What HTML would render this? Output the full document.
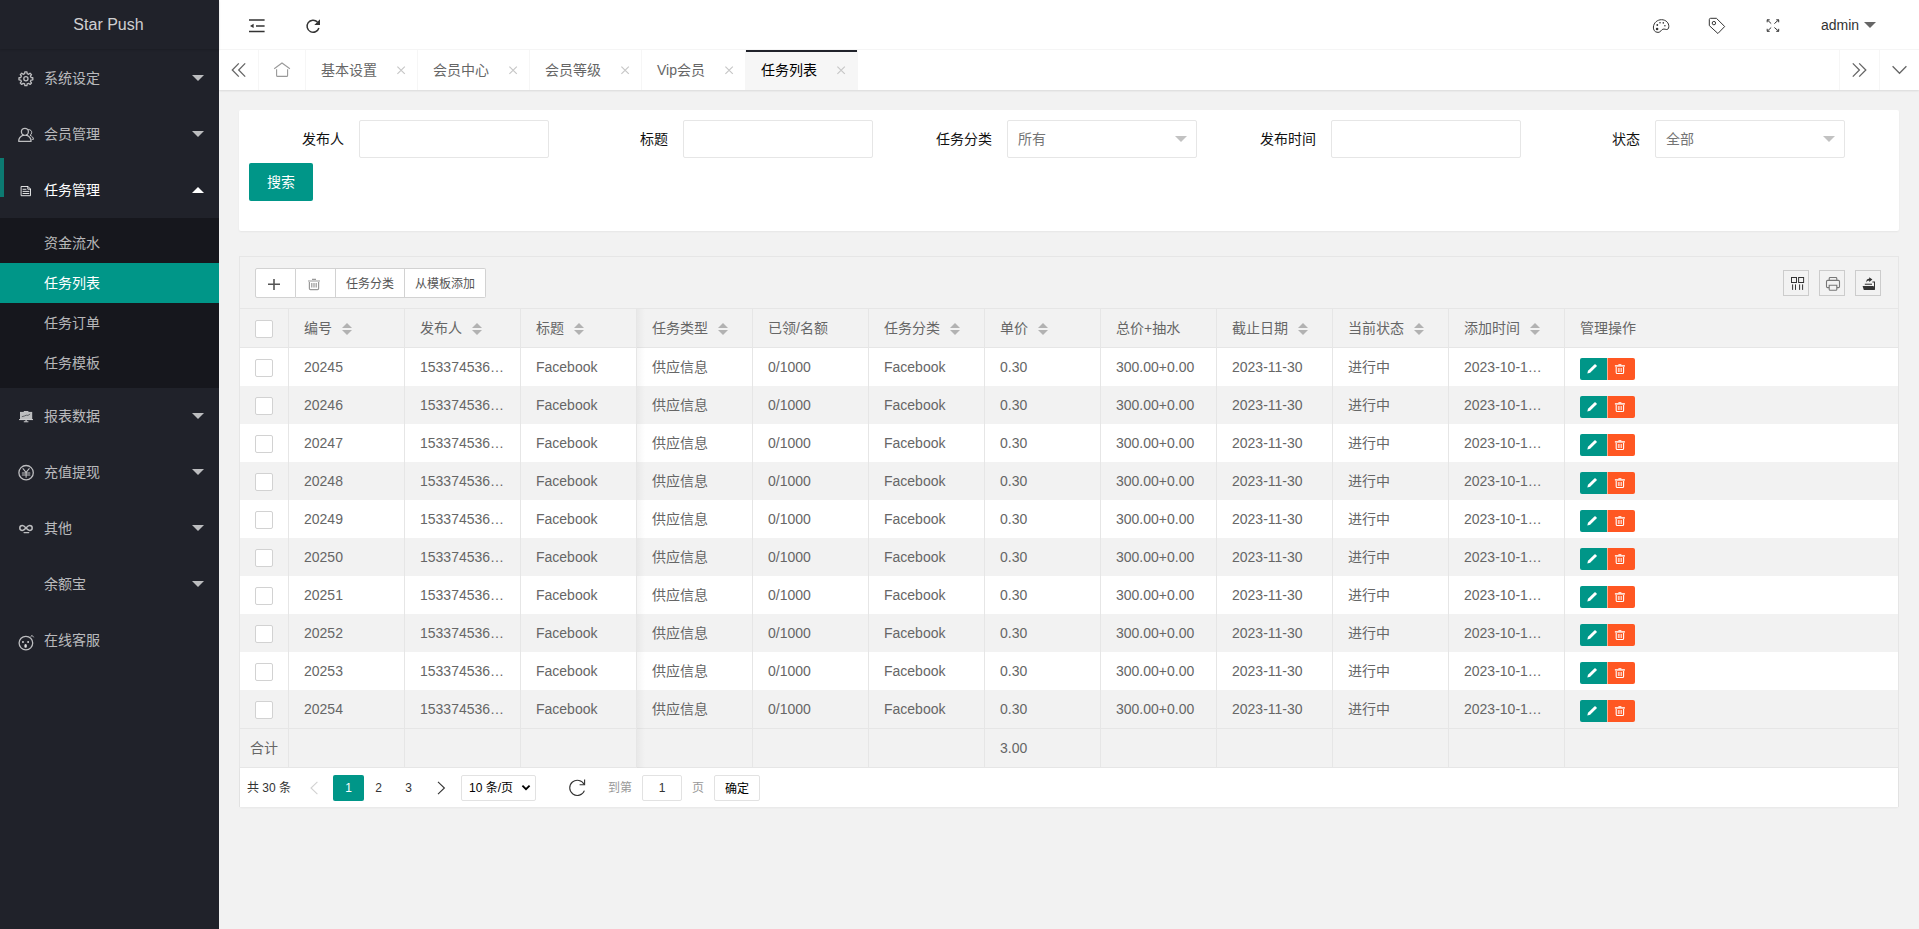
<!DOCTYPE html>
<html lang="zh-CN">
<head>
<meta charset="utf-8">
<title>Star Push</title>
<style>
*{box-sizing:border-box;margin:0;padding:0}
html,body{width:1919px;height:929px;overflow:hidden}
body{font-family:"Liberation Sans","Noto Sans CJK SC",sans-serif;font-size:14px;line-height:24px;color:#333;background:#f2f2f2;position:relative}
ul,li,dl,dd{list-style:none}
svg{display:block}
.abs{position:absolute}

/* ---------- side ---------- */
.side{position:absolute;left:0;top:0;width:219px;height:929px;background:#20222a;color:rgba(255,255,255,.7);z-index:5}
.logo{position:absolute;left:0;top:0;width:219px;height:49px;line-height:50px;padding-right:2px;text-align:center;font-size:16px;color:rgba(255,255,255,.8);box-shadow:0 1px 2px 0 rgba(0,0,0,.15)}
.nav{position:absolute;left:0;top:50px;width:219px}
.nav .it{position:relative;height:56px;line-height:56px;padding-left:44px;font-size:14px;color:rgba(255,255,255,.7)}
.nav .it.on{color:#fff}
.nav .it .ic{position:absolute;left:18px;top:20px;width:16px;height:16px}
.nav .it .more{position:absolute;right:15px;top:25px;width:0;height:0;border:6px solid transparent;border-top-color:rgba(255,255,255,.7);border-bottom-width:0}
.nav .it.on .more{border-top-width:0;border-bottom-width:6px;border-bottom-color:#fff;top:25px}
.nav .child{background:rgba(0,0,0,.3);padding:5px 0}
.nav .child dd{height:40px;line-height:40px;padding-left:44px;color:rgba(255,255,255,.7)}
.nav .child dd.this{background:#009688;color:#fff}
.navbar{position:absolute;left:0;top:158px;width:4px;height:39px;background:#0c7a71}

/* ---------- header ---------- */
.header{position:absolute;left:219px;top:0;width:1700px;height:50px;background:#fff;border-bottom:1px solid #f6f6f6}
.header .hi{position:absolute;top:0;height:50px}
.tabs{position:absolute;left:219px;top:50px;width:1700px;height:40px;background:#fff;box-shadow:0 1px 2px 0 rgba(0,0,0,.1);line-height:40px;color:#666;z-index:2}
.tabs .ctl{position:absolute;top:0;width:40px;height:40px;border-left:1px solid #f6f6f6}
.tabs .ctl.prev{left:0;border-left:none;border-right:1px solid #f6f6f6}
.tabs .ctl.next{right:40px}
.tabs .ctl.down{right:0}
.tabs ul{position:absolute;left:40px;top:0;height:40px;white-space:nowrap;font-size:0}
.tabs li{position:relative;display:inline-block;vertical-align:top;height:40px;line-height:40px;font-size:14px;padding:0 40px 0 15px;border-right:1px solid #f6f6f6;color:#666}
.tabs li.home{padding:0 15px;width:47px}
.tabs li.this{background:#f6f6f6;color:#000}
.tabs li.this:after{content:"";position:absolute;left:0;top:0;width:100%;height:2px;background:#20222a}
.tabs li .x{position:absolute;right:10px;top:14px;width:12px;height:12px}

/* ---------- body ---------- */
.card{position:absolute;left:239px;top:110px;width:1660px;height:121px;background:#fff;border-radius:2px;box-shadow:0 1px 2px 0 rgba(0,0,0,.05)}
.flabel{position:absolute;top:120px;height:38px;line-height:38px;width:110px;padding:0 15px;text-align:right;color:#111}
.finput{position:absolute;top:120px;height:38px;width:190px;border:1px solid #e6e6e6;border-radius:2px;background:#fff;line-height:36px;padding-left:10px;color:#757575}
.finput .edge{position:absolute;right:9px;top:15px;width:0;height:0;border:6px solid transparent;border-top-color:#c2c2c2;border-bottom-width:0}
.sbtn{position:absolute;left:249px;top:163px;width:64px;height:38px;line-height:38px;background:#009688;color:#fff;text-align:center;border-radius:2px;font-size:14px}

.tview{position:absolute;left:239px;top:256px;width:1660px;height:551px;border:1px solid #e6e6e6;border-bottom:none;color:#666}
.tool{position:absolute;left:0;top:0;width:1658px;height:52px;border-bottom:1px solid #e6e6e6;background:#f2f2f2}
.bgrp{position:absolute;left:15px;top:11px;height:30px;font-size:0;white-space:nowrap}
.bgrp span{display:inline-block;vertical-align:top;height:30px;line-height:30px;font-size:12px;color:#555;background:#fff;border:1px solid #d2d2d2;border-left:none;text-align:center}
.bgrp span:first-child{border-left:1px solid #d2d2d2;border-radius:2px 0 0 2px}
.bgrp span:last-child{border-radius:0 2px 2px 0}
.tself{position:absolute;top:13px;width:26px;height:26px;border:1px solid #ccc}

table{border-collapse:separate;border-spacing:0;table-layout:fixed}
.thead{position:absolute;left:0;top:52px;width:1658px;height:39px;border-bottom:1px solid #e6e6e6;background:#f2f2f2}
.tbody{position:absolute;left:0;top:91px;width:1658px}
.ttotal{position:absolute;left:0;top:471px;width:1658px;height:40px;border-top:1px solid #e6e6e6;border-bottom:1px solid #e6e6e6;background:#f2f2f2}
.tview td,.tview th{height:38px;border-right:1px solid #e6e6e6;padding:0 15px;font-weight:400;text-align:left;font-size:14px;line-height:28px;color:#666;white-space:nowrap;overflow:hidden}
.tview td:last-child,.tview th:last-child{border-right:none}
.tview tr.ev td{background:#f2f2f2}
.tview tr td{background:#fff}
.ttotal td{background:#f2f2f2 !important}
.ck{display:block;width:18px;height:18px;border:1px solid #d2d2d2;border-radius:2px;background:#fff;margin-top:1px}
.sort{display:inline-block;position:relative;vertical-align:middle;width:10px;height:20px;margin-left:10px;top:0px}
.sort:before{content:"";position:absolute;left:0;top:4px;border:5px solid transparent;border-top-width:0;border-bottom-color:#b2b2b2}
.sort:after{content:"";position:absolute;left:0;top:11px;border:5px solid transparent;border-bottom-width:0;border-top-color:#b2b2b2}
.ops{display:block;font-size:0;height:22px;margin-top:3px}
.ops i{display:inline-block;vertical-align:top;height:22px}
.ops .e{width:27px;background:#009688;border-radius:2px 0 0 2px}
.ops .d{width:28px;background:#ff5722;border-radius:0 2px 2px 0;border-left:1px solid rgba(255,255,255,.5)}
.shadow{position:absolute;left:397px;top:52px;width:8px;height:459px;background:linear-gradient(to right,rgba(0,0,0,.04),rgba(0,0,0,0))}

.pager{position:absolute;left:0;top:511px;width:1658px;height:39px;background:#fff;font-size:12px;line-height:26px;color:#333;box-shadow:0 1px 2px 0 rgba(0,0,0,.05)}
.pager .p{position:absolute;top:7px;height:26px;line-height:26px;white-space:nowrap}
</style>
</head>
<body>

<!-- SIDE -->
<div class="side">
  <div class="logo">Star Push</div>
  <div class="nav">
    <div class="it">系统设定<span class="more"></span></div>
    <div class="it">会员管理<span class="more"></span></div>
    <div class="it on">任务管理<span class="more"></span></div>
    <dl class="child">
      <dd>资金流水</dd>
      <dd class="this">任务列表</dd>
      <dd>任务订单</dd>
      <dd>任务模板</dd>
    </dl>
    <div class="it">报表数据<span class="more"></span></div>
    <div class="it">充值提现<span class="more"></span></div>
    <div class="it">其他<span class="more"></span></div>
    <div class="it">余额宝<span class="more"></span></div>
    <div class="it">在线客服</div>
  </div>
  <div class="navbar"></div>
  <svg class="abs" style="left:0;top:0" width="219" height="929" viewBox="0 0 219 929" fill="none" stroke="rgba(255,255,255,.7)" stroke-width="1.3" stroke-linejoin="round" stroke-linecap="round"><path d="M31.05 77.56 L32.82 77.76 L32.82 79.84 L31.05 80.04 L30.42 81.57 L31.53 82.96 L30.06 84.43 L28.67 83.32 L27.14 83.95 L26.94 85.72 L24.86 85.72 L24.66 83.95 L23.13 83.32 L21.74 84.43 L20.27 82.96 L21.38 81.57 L20.75 80.04 L18.98 79.84 L18.98 77.76 L20.75 77.56 L21.38 76.03 L20.27 74.64 L21.74 73.17 L23.13 74.28 L24.66 73.65 L24.86 71.88 L26.94 71.88 L27.14 73.65 L28.67 74.28 L30.06 73.17 L31.53 74.64 L30.42 76.03Z"/><circle cx="25.9" cy="78.8" r="2.1"/><circle cx="24.9" cy="131.8" r="3.5"/><path d="M23.2 135.2 C20.2 136.4 18.7 138.6 18.7 141.3 H31.1 C31.1 138.6 29.6 136.4 26.6 135.2"/><path d="M28.6 129.6 C30.6 129.4 31.9 131 31.7 132.8 C31.6 134 30.8 134.9 30 135.3 C32.2 136.2 33.4 137.6 33.5 139.3 H32.2" stroke-width="1"/><g stroke="rgba(255,255,255,.85)" stroke-width="1"><path d="M21.5 186.5 H28 L30.5 189 V195.7 H21.5 Z" stroke-linejoin="miter"/><path d="M27.8 186.6 V189.2 H30.4" /><path d="M23 189.3 H26 M23 191.4 H28.9 M23 193.5 H28.9"/></g><g stroke="none" fill="rgba(255,255,255,.7)"><rect x="20" y="411.9" width="12.2" height="7.4"/><rect x="23.8" y="411" width="4.6" height="1"/><rect x="19" y="419" width="14" height="1.1"/><rect x="25.4" y="420" width="1.4" height="1.4"/><rect x="23.8" y="421.2" width="4.6" height="1.1"/></g><path d="M22.2 416.6 L24.4 416 L26.2 415.2 L28 415.4 L29.8 414.2" stroke="#3a3c44" stroke-width=".7"/><circle cx="26.1" cy="472.7" r="7.2"/><path d="M23 468.7 L26.1 472.4 L29.2 468.7 M22.3 473 H29.9 M22.3 475 H29.9 M26.1 472.4 V477.2" stroke-width="1.1"/><path d="M26 528 C24.6 526.4 23.6 525.6 22.4 525.6 C20.9 525.6 19.8 526.7 19.8 528 C19.8 529.3 20.9 530.4 22.4 530.4 C23.6 530.4 24.6 529.6 26 528 C27.4 526.4 28.4 525.6 29.6 525.6 C31.1 525.6 32.2 526.7 32.2 528 C32.2 529.3 31.1 530.4 29.6 530.4 C28.4 530.4 27.4 529.6 26 528 Z" stroke-width="1.5"/><path d="M24 532.6 H28.8" stroke-width="1.1"/><circle cx="25.9" cy="643.1" r="6.8"/><g stroke="none" fill="rgba(255,255,255,.85)"><rect x="22.1" y="641.2" width="1.7" height="1.6"/><rect x="27.3" y="641.2" width="1.7" height="1.6"/><ellipse cx="25.6" cy="645.9" rx="1.3" ry="1.9"/></g><path d="M31 636.2 L32.2 635.5 L33.4 637" stroke-width="1"/></svg>
</div>

<!-- HEADER -->
<div class="header">
  <svg class="abs" style="left:0;top:0" width="1700" height="50" viewBox="219 0 1700 50" fill="none" stroke="#333" stroke-width="1.5"><path d="M249 20.1 H264.6 M256 25.9 H264.6 M249 31.5 H264.6"/><path d="M250 25.9 L253.6 23.7 V28.1 Z" fill="#333" stroke="none"/><path d="M317.4 21.9 A6.05 6.05 0 1 0 318.9 28.0"/><path d="M320 19.2 V24.9 H314.3 Z" fill="#333" stroke="none"/><g stroke-width="1" stroke="#333"><path d="M1658 32.4 C1654.5 32.4 1653.2 29.5 1653.4 27 C1653.8 22.5 1657.5 19.7 1661.5 19.7 C1666 19.7 1669 23 1668.8 26.6 C1668.7 28.9 1667.6 29.7 1666.3 29.5 C1664.8 29.2 1663.2 28.5 1661.8 29.9 C1660.7 31.1 1659.8 32.4 1658 32.4 Z"/></g><g fill="#333" stroke="none"><circle cx="1657.1" cy="29" r="1.3"/><circle cx="1657.3" cy="25" r=".9"/><circle cx="1660" cy="22.7" r=".8"/><circle cx="1663.3" cy="22.9" r=".8"/><circle cx="1664.9" cy="25.8" r=".8"/></g><g stroke-width="1" stroke="#333"><path d="M1710.6 18.3 H1716.4 L1724.7 26.5 L1717.9 33.5 L1709.3 25.6 V19.6 Q1709.3 18.3 1710.6 18.3 Z" stroke-linejoin="round"/><circle cx="1713.9" cy="23.1" r="1.7"/></g><g stroke-width="1" stroke="#333"><path d="M1771.2 23.6 L1767.3 19.9 M1767.2 22.3 V19.8 H1769.7 M1774.4 23.6 L1778.6 19.9 M1776.2 19.8 H1778.7 V22.3 M1771.2 27.5 L1767.3 31.2 M1767.2 28.8 V31.3 H1769.7 M1774.4 27.5 L1778.6 31.2 M1776.2 31.3 H1778.7 V28.8"/></g></svg><span class="abs" style="left:1602px;top:13px;height:24px;line-height:24px;font-size:14px;color:#333">admin</span><span class="abs" style="left:1645px;top:22px;width:0;height:0;border:6px solid transparent;border-top-color:#666;border-bottom-width:0"></span>
</div>

<!-- TABS -->
<div class="tabs">
  <div class="ctl prev"></div>
  <ul>
    <li class="home"></li>
    <li>基本设置<svg class="x" width="12" height="12" viewBox="0 0 12 12" fill="none" stroke="#c6c6c6" stroke-width="1.15"><path d="M2.4 2.7 L9.8 9.9 M9.8 2.7 L2.4 9.9"/></svg></li>
    <li>会员中心<svg class="x" width="12" height="12" viewBox="0 0 12 12" fill="none" stroke="#c6c6c6" stroke-width="1.15"><path d="M2.4 2.7 L9.8 9.9 M9.8 2.7 L2.4 9.9"/></svg></li>
    <li>会员等级<svg class="x" width="12" height="12" viewBox="0 0 12 12" fill="none" stroke="#c6c6c6" stroke-width="1.15"><path d="M2.4 2.7 L9.8 9.9 M9.8 2.7 L2.4 9.9"/></svg></li>
    <li>Vip会员<svg class="x" width="12" height="12" viewBox="0 0 12 12" fill="none" stroke="#c6c6c6" stroke-width="1.15"><path d="M2.4 2.7 L9.8 9.9 M9.8 2.7 L2.4 9.9"/></svg></li>
    <li class="this">任务列表<svg class="x" width="12" height="12" viewBox="0 0 12 12" fill="none" stroke="#c6c6c6" stroke-width="1.15"><path d="M2.4 2.7 L9.8 9.9 M9.8 2.7 L2.4 9.9"/></svg></li>
  </ul>
  <div class="ctl next"></div>
  <div class="ctl down"></div>
  <svg class="abs" style="left:0;top:0;z-index:3;pointer-events:none" width="1700" height="40" viewBox="219 50 1700 40" fill="none" stroke="#666" stroke-width="1.3"><path d="M238.8 63.4 L232.3 70 L238.8 76.6 M245.2 63.4 L238.7 70 L245.2 76.6"/><path d="M1852.8 63.4 L1859.4 70 L1852.8 76.6 M1859.2 63.4 L1865.8 70 L1859.2 76.6"/><path d="M1892.6 66.3 L1899.5 73.3 L1906.4 66.3"/><g stroke="#999" stroke-width="1.1"><path d="M274.2 68.7 L282 63 L289.9 68.7"/><path d="M276.6 69.2 V75.4 Q276.6 76.4 277.6 76.4 H286.6 Q287.6 76.4 287.6 75.4 V69.2"/></g></svg>
</div>

<!-- SEARCH CARD -->
<div class="card"></div>
<div class="flabel" style="left:249px">发布人</div><div class="finput" style="left:359px"></div>
<div class="flabel" style="left:573px">标题</div><div class="finput" style="left:683px"></div>
<div class="flabel" style="left:897px">任务分类</div><div class="finput" style="left:1007px">所有<span class="edge"></span></div>
<div class="flabel" style="left:1221px">发布时间</div><div class="finput" style="left:1331px"></div>
<div class="flabel" style="left:1545px">状态</div><div class="finput" style="left:1655px">全部<span class="edge"></span></div>
<div class="sbtn">搜索</div>

<!-- TABLE -->
<div class="tview">
  <div class="tool">
    <div class="bgrp"><span style="width:41px"></span><span style="width:40px"></span><span style="width:69px">任务分类</span><span style="width:81px">从模板添加</span></div>
    <div class="tself" style="left:1543px" id="t1"></div>
    <div class="tself" style="left:1579px" id="t2"></div>
    <div class="tself" style="left:1615px" id="t3"></div>
    <svg class="abs" style="left:0;top:0" width="1658" height="51" viewBox="240 257 1658 51" fill="none"><path d="M268 284.3 H280 M274 278.9 V290" stroke="#555" stroke-width="1.6"/><g stroke="#999" stroke-width="1"><path d="M308 281 H320 M312 279.4 H316 M309.4 282 V288.6 Q309.4 289.6 310.4 289.6 H317.6 Q318.6 289.6 318.6 288.6 V282 M311.8 283 V287.6 M314 283 V287.6 M316.2 283 V287.6" stroke-width="1.2"/></g><g stroke="#333" stroke-width="1"><rect x="1791.5" y="277.5" width="5" height="5"/><rect x="1798.6" y="277.5" width="5" height="5"/><path d="M1792.6 284.4 V289.9 M1795.5 284.4 V289.9 M1799.6 284.4 V289.9 M1802.6 284.4 V289.9"/></g><g stroke="#777" stroke-width="1.1"><path d="M1829.2 280.3 V278.4 Q1829.2 277.5 1830.1 277.5 H1835.9 Q1836.8 277.5 1836.8 278.4 V280.3"/><path d="M1829 287.6 H1827.6 Q1826.5 287.6 1826.5 286.4 V281.6 Q1826.5 280.4 1827.6 280.4 H1838.4 Q1839.5 280.4 1839.5 281.6 V286.4 Q1839.5 287.6 1838.4 287.6 H1837"/><path d="M1829.2 285.2 H1836.8 V289.4 Q1836.8 290.3 1835.9 290.3 H1830.1 Q1829.2 290.3 1829.2 289.4 Z"/></g><g fill="#333" stroke="none"><path d="M1862.6 286 H1873.6 L1874.6 290 H1863.8 Z"/><path d="M1864.8 283.6 H1872 V285 H1864.8 Z" opacity=".75"/><path d="M1872.4 281.4 H1875 V289.8 H1874 V282.4 H1872.4 Z"/><path d="M1869.2 277.2 L1872.4 279.6 L1869.2 282 V280.4 C1867.6 280.4 1866.8 281.2 1866.4 282.6 C1866 280.2 1867 278.9 1869.2 278.8 Z"/></g></svg>
  </div>
  <div class="thead"><table><colgroup><col style="width:49px"><col style="width:116px"><col style="width:116px"><col style="width:116px"><col style="width:116px"><col style="width:116px"><col style="width:116px"><col style="width:116px"><col style="width:116px"><col style="width:116px"><col style="width:116px"><col style="width:116px"><col style="width:333px"></colgroup><tr><th><span class="ck"></span></th><th>编号<span class="sort"></span></th><th>发布人<span class="sort"></span></th><th>标题<span class="sort"></span></th><th>任务类型<span class="sort"></span></th><th>已领/名额</th><th>任务分类<span class="sort"></span></th><th>单价<span class="sort"></span></th><th>总价+抽水</th><th>截止日期<span class="sort"></span></th><th>当前状态<span class="sort"></span></th><th>添加时间<span class="sort"></span></th><th>管理操作</th></tr></table></div>
  <div class="tbody"><table><colgroup><col style="width:49px"><col style="width:116px"><col style="width:116px"><col style="width:116px"><col style="width:116px"><col style="width:116px"><col style="width:116px"><col style="width:116px"><col style="width:116px"><col style="width:116px"><col style="width:116px"><col style="width:116px"><col style="width:333px"></colgroup><tr><td><span class="ck"></span></td><td>20245</td><td>153374536…</td><td>Facebook</td><td>供应信息</td><td>0/1000</td><td>Facebook</td><td>0.30</td><td>300.00+0.00</td><td>2023-11-30</td><td>进行中</td><td>2023-10-1…</td><td><span class="ops"><i class="e"><svg width="27" height="22" viewBox="0 0 27 22"><path d="M7.3 15.4 L8 12.7 L14.4 6.4 Q15 5.9 15.6 6.4 L16.5 7.3 Q17 7.9 16.5 8.5 L10.1 14.7 Z" fill="#fff"/></svg></i><i class="d"><svg width="27" height="22" viewBox="0 0 27 22"><g fill="none" stroke="#fff"><path d="M6.9 7.9 H16.9" stroke-width="1.4"/><path d="M10.4 6.7 H13.4" stroke-width="1"/><path d="M8.2 9 V14.4 Q8.2 15.5 9.3 15.5 H14.5 Q15.6 15.5 15.6 14.4 V9" stroke-width="1.1"/><path d="M10.4 10 V14 M11.9 10 V14 M13.4 10 V14" stroke-width=".9" opacity=".85"/></g></svg></i></span></td></tr><tr class="ev"><td><span class="ck"></span></td><td>20246</td><td>153374536…</td><td>Facebook</td><td>供应信息</td><td>0/1000</td><td>Facebook</td><td>0.30</td><td>300.00+0.00</td><td>2023-11-30</td><td>进行中</td><td>2023-10-1…</td><td><span class="ops"><i class="e"><svg width="27" height="22" viewBox="0 0 27 22"><path d="M7.3 15.4 L8 12.7 L14.4 6.4 Q15 5.9 15.6 6.4 L16.5 7.3 Q17 7.9 16.5 8.5 L10.1 14.7 Z" fill="#fff"/></svg></i><i class="d"><svg width="27" height="22" viewBox="0 0 27 22"><g fill="none" stroke="#fff"><path d="M6.9 7.9 H16.9" stroke-width="1.4"/><path d="M10.4 6.7 H13.4" stroke-width="1"/><path d="M8.2 9 V14.4 Q8.2 15.5 9.3 15.5 H14.5 Q15.6 15.5 15.6 14.4 V9" stroke-width="1.1"/><path d="M10.4 10 V14 M11.9 10 V14 M13.4 10 V14" stroke-width=".9" opacity=".85"/></g></svg></i></span></td></tr><tr><td><span class="ck"></span></td><td>20247</td><td>153374536…</td><td>Facebook</td><td>供应信息</td><td>0/1000</td><td>Facebook</td><td>0.30</td><td>300.00+0.00</td><td>2023-11-30</td><td>进行中</td><td>2023-10-1…</td><td><span class="ops"><i class="e"><svg width="27" height="22" viewBox="0 0 27 22"><path d="M7.3 15.4 L8 12.7 L14.4 6.4 Q15 5.9 15.6 6.4 L16.5 7.3 Q17 7.9 16.5 8.5 L10.1 14.7 Z" fill="#fff"/></svg></i><i class="d"><svg width="27" height="22" viewBox="0 0 27 22"><g fill="none" stroke="#fff"><path d="M6.9 7.9 H16.9" stroke-width="1.4"/><path d="M10.4 6.7 H13.4" stroke-width="1"/><path d="M8.2 9 V14.4 Q8.2 15.5 9.3 15.5 H14.5 Q15.6 15.5 15.6 14.4 V9" stroke-width="1.1"/><path d="M10.4 10 V14 M11.9 10 V14 M13.4 10 V14" stroke-width=".9" opacity=".85"/></g></svg></i></span></td></tr><tr class="ev"><td><span class="ck"></span></td><td>20248</td><td>153374536…</td><td>Facebook</td><td>供应信息</td><td>0/1000</td><td>Facebook</td><td>0.30</td><td>300.00+0.00</td><td>2023-11-30</td><td>进行中</td><td>2023-10-1…</td><td><span class="ops"><i class="e"><svg width="27" height="22" viewBox="0 0 27 22"><path d="M7.3 15.4 L8 12.7 L14.4 6.4 Q15 5.9 15.6 6.4 L16.5 7.3 Q17 7.9 16.5 8.5 L10.1 14.7 Z" fill="#fff"/></svg></i><i class="d"><svg width="27" height="22" viewBox="0 0 27 22"><g fill="none" stroke="#fff"><path d="M6.9 7.9 H16.9" stroke-width="1.4"/><path d="M10.4 6.7 H13.4" stroke-width="1"/><path d="M8.2 9 V14.4 Q8.2 15.5 9.3 15.5 H14.5 Q15.6 15.5 15.6 14.4 V9" stroke-width="1.1"/><path d="M10.4 10 V14 M11.9 10 V14 M13.4 10 V14" stroke-width=".9" opacity=".85"/></g></svg></i></span></td></tr><tr><td><span class="ck"></span></td><td>20249</td><td>153374536…</td><td>Facebook</td><td>供应信息</td><td>0/1000</td><td>Facebook</td><td>0.30</td><td>300.00+0.00</td><td>2023-11-30</td><td>进行中</td><td>2023-10-1…</td><td><span class="ops"><i class="e"><svg width="27" height="22" viewBox="0 0 27 22"><path d="M7.3 15.4 L8 12.7 L14.4 6.4 Q15 5.9 15.6 6.4 L16.5 7.3 Q17 7.9 16.5 8.5 L10.1 14.7 Z" fill="#fff"/></svg></i><i class="d"><svg width="27" height="22" viewBox="0 0 27 22"><g fill="none" stroke="#fff"><path d="M6.9 7.9 H16.9" stroke-width="1.4"/><path d="M10.4 6.7 H13.4" stroke-width="1"/><path d="M8.2 9 V14.4 Q8.2 15.5 9.3 15.5 H14.5 Q15.6 15.5 15.6 14.4 V9" stroke-width="1.1"/><path d="M10.4 10 V14 M11.9 10 V14 M13.4 10 V14" stroke-width=".9" opacity=".85"/></g></svg></i></span></td></tr><tr class="ev"><td><span class="ck"></span></td><td>20250</td><td>153374536…</td><td>Facebook</td><td>供应信息</td><td>0/1000</td><td>Facebook</td><td>0.30</td><td>300.00+0.00</td><td>2023-11-30</td><td>进行中</td><td>2023-10-1…</td><td><span class="ops"><i class="e"><svg width="27" height="22" viewBox="0 0 27 22"><path d="M7.3 15.4 L8 12.7 L14.4 6.4 Q15 5.9 15.6 6.4 L16.5 7.3 Q17 7.9 16.5 8.5 L10.1 14.7 Z" fill="#fff"/></svg></i><i class="d"><svg width="27" height="22" viewBox="0 0 27 22"><g fill="none" stroke="#fff"><path d="M6.9 7.9 H16.9" stroke-width="1.4"/><path d="M10.4 6.7 H13.4" stroke-width="1"/><path d="M8.2 9 V14.4 Q8.2 15.5 9.3 15.5 H14.5 Q15.6 15.5 15.6 14.4 V9" stroke-width="1.1"/><path d="M10.4 10 V14 M11.9 10 V14 M13.4 10 V14" stroke-width=".9" opacity=".85"/></g></svg></i></span></td></tr><tr><td><span class="ck"></span></td><td>20251</td><td>153374536…</td><td>Facebook</td><td>供应信息</td><td>0/1000</td><td>Facebook</td><td>0.30</td><td>300.00+0.00</td><td>2023-11-30</td><td>进行中</td><td>2023-10-1…</td><td><span class="ops"><i class="e"><svg width="27" height="22" viewBox="0 0 27 22"><path d="M7.3 15.4 L8 12.7 L14.4 6.4 Q15 5.9 15.6 6.4 L16.5 7.3 Q17 7.9 16.5 8.5 L10.1 14.7 Z" fill="#fff"/></svg></i><i class="d"><svg width="27" height="22" viewBox="0 0 27 22"><g fill="none" stroke="#fff"><path d="M6.9 7.9 H16.9" stroke-width="1.4"/><path d="M10.4 6.7 H13.4" stroke-width="1"/><path d="M8.2 9 V14.4 Q8.2 15.5 9.3 15.5 H14.5 Q15.6 15.5 15.6 14.4 V9" stroke-width="1.1"/><path d="M10.4 10 V14 M11.9 10 V14 M13.4 10 V14" stroke-width=".9" opacity=".85"/></g></svg></i></span></td></tr><tr class="ev"><td><span class="ck"></span></td><td>20252</td><td>153374536…</td><td>Facebook</td><td>供应信息</td><td>0/1000</td><td>Facebook</td><td>0.30</td><td>300.00+0.00</td><td>2023-11-30</td><td>进行中</td><td>2023-10-1…</td><td><span class="ops"><i class="e"><svg width="27" height="22" viewBox="0 0 27 22"><path d="M7.3 15.4 L8 12.7 L14.4 6.4 Q15 5.9 15.6 6.4 L16.5 7.3 Q17 7.9 16.5 8.5 L10.1 14.7 Z" fill="#fff"/></svg></i><i class="d"><svg width="27" height="22" viewBox="0 0 27 22"><g fill="none" stroke="#fff"><path d="M6.9 7.9 H16.9" stroke-width="1.4"/><path d="M10.4 6.7 H13.4" stroke-width="1"/><path d="M8.2 9 V14.4 Q8.2 15.5 9.3 15.5 H14.5 Q15.6 15.5 15.6 14.4 V9" stroke-width="1.1"/><path d="M10.4 10 V14 M11.9 10 V14 M13.4 10 V14" stroke-width=".9" opacity=".85"/></g></svg></i></span></td></tr><tr><td><span class="ck"></span></td><td>20253</td><td>153374536…</td><td>Facebook</td><td>供应信息</td><td>0/1000</td><td>Facebook</td><td>0.30</td><td>300.00+0.00</td><td>2023-11-30</td><td>进行中</td><td>2023-10-1…</td><td><span class="ops"><i class="e"><svg width="27" height="22" viewBox="0 0 27 22"><path d="M7.3 15.4 L8 12.7 L14.4 6.4 Q15 5.9 15.6 6.4 L16.5 7.3 Q17 7.9 16.5 8.5 L10.1 14.7 Z" fill="#fff"/></svg></i><i class="d"><svg width="27" height="22" viewBox="0 0 27 22"><g fill="none" stroke="#fff"><path d="M6.9 7.9 H16.9" stroke-width="1.4"/><path d="M10.4 6.7 H13.4" stroke-width="1"/><path d="M8.2 9 V14.4 Q8.2 15.5 9.3 15.5 H14.5 Q15.6 15.5 15.6 14.4 V9" stroke-width="1.1"/><path d="M10.4 10 V14 M11.9 10 V14 M13.4 10 V14" stroke-width=".9" opacity=".85"/></g></svg></i></span></td></tr><tr class="ev"><td><span class="ck"></span></td><td>20254</td><td>153374536…</td><td>Facebook</td><td>供应信息</td><td>0/1000</td><td>Facebook</td><td>0.30</td><td>300.00+0.00</td><td>2023-11-30</td><td>进行中</td><td>2023-10-1…</td><td><span class="ops"><i class="e"><svg width="27" height="22" viewBox="0 0 27 22"><path d="M7.3 15.4 L8 12.7 L14.4 6.4 Q15 5.9 15.6 6.4 L16.5 7.3 Q17 7.9 16.5 8.5 L10.1 14.7 Z" fill="#fff"/></svg></i><i class="d"><svg width="27" height="22" viewBox="0 0 27 22"><g fill="none" stroke="#fff"><path d="M6.9 7.9 H16.9" stroke-width="1.4"/><path d="M10.4 6.7 H13.4" stroke-width="1"/><path d="M8.2 9 V14.4 Q8.2 15.5 9.3 15.5 H14.5 Q15.6 15.5 15.6 14.4 V9" stroke-width="1.1"/><path d="M10.4 10 V14 M11.9 10 V14 M13.4 10 V14" stroke-width=".9" opacity=".85"/></g></svg></i></span></td></tr></table></div>
  <div class="ttotal"><table><colgroup><col style="width:49px"><col style="width:116px"><col style="width:116px"><col style="width:116px"><col style="width:116px"><col style="width:116px"><col style="width:116px"><col style="width:116px"><col style="width:116px"><col style="width:116px"><col style="width:116px"><col style="width:116px"><col style="width:333px"></colgroup><tr><td style="padding:0 0 0 10px">合计</td><td></td><td></td><td></td><td></td><td></td><td></td><td>3.00</td><td></td><td></td><td></td><td></td><td></td></tr></table></div>
  <div class="shadow"></div>
  <div class="pager">
    <svg class="abs" style="left:0;top:0" width="1658" height="39" viewBox="240 768 1658 39" fill="none"><path d="M317.4 781.8 L311 788 L317.4 794.2" stroke="#d2d2d2" stroke-width="1.1"/><path d="M438 781.8 L444.4 788 L438 794.2" stroke="#333" stroke-width="1.1"/><path d="M584.2 784.6 A7.6 7.6 0 1 0 584.4 790.6" stroke="#333" stroke-width="1.1"/><path d="M584.6 779.6 V784.8 H579.6" stroke="#333" stroke-width="1.1"/><path d="M522.4 785.6 L526 789.2 L529.6 785.6" stroke="#000" stroke-width="1.8"/></svg>
    <span class="p" style="left:7px">共 30 条</span>
    <span class="p" style="left:93px;width:31px;background:#009688;color:#fff;text-align:center;border-radius:2px">1</span>
    <span class="p" style="left:123px;width:31px;text-align:center">2</span>
    <span class="p" style="left:153px;width:31px;text-align:center">3</span>
    <span class="p" style="left:221px;width:75px;border:1px solid #e2e2e2;border-radius:2px;line-height:25px;padding-left:7px;color:#000">10 条/页</span>
    <span class="p" style="left:368px;color:#999">到第</span>
    <span class="p" style="left:402px;width:40px;border:1px solid #e2e2e2;border-radius:2px;line-height:24px;text-align:center">1</span>
    <span class="p" style="left:452px;color:#999">页</span>
    <span class="p" style="left:474px;width:46px;border:1px solid #e2e2e2;border-radius:2px;line-height:26px;text-align:center;color:#000">确定</span>
  </div>
</div>

</body>
</html>
